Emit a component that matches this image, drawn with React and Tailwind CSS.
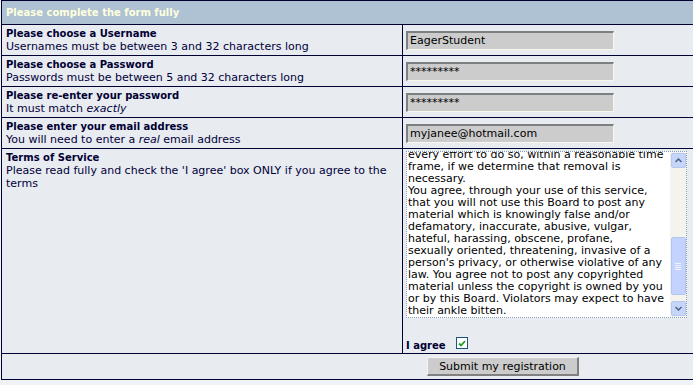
import React from 'react';

const font = { fontFamily: '"DejaVu Sans", Verdana, sans-serif' };

const rows = [
  { title: 'Please choose a Username', sub: <>Usernames must be between 3 and 32 characters long</>, value: 'EagerStudent' },
  { title: 'Please choose a Password', sub: <>Passwords must be between 5 and 32 characters long</>, value: '*********' },
  { title: 'Please re-enter your password', sub: <>It must match <i>exactly</i></>, value: '*********' },
  { title: 'Please enter your email address', sub: <>You will need to enter a <i>real</i> email address</>, value: 'myjanee@hotmail.com' },
];

const terms = [
  'every effort to do so, within a reasonable time',
  'frame, if we determine that removal is',
  'necessary.',
  'You agree, through your use of this service,',
  'that you will not use this Board to post any',
  'material which is knowingly false and/or',
  'defamatory, inaccurate, abusive, vulgar,',
  'hateful, harassing, obscene, profane,',
  'sexually oriented, threatening, invasive of a',
  "person's privacy, or otherwise violative of any",
  'law. You agree not to post any copyrighted',
  'material unless the copyright is owned by you',
  'or by this Board. Violators may expect to have',
  'their ankle bitten.',
];

const Field = ({ value }) => (
  <div className="w-[208px] h-[19px] bg-[#cccccc] border-t-2 border-l-2 border-b border-r border-t-[#7c8080] border-l-[#7c8080] border-b-[#f7f7ee] border-r-[#f7f7ee] pl-[2px] text-[11px] leading-[16px] text-black">
    {value}
  </div>
);

const Scrollbar = () => (
  <div className="w-[16px] h-full bg-[#f4f3ee] flex flex-col items-center py-[1px]">
    {/* up */}
    <div className="w-[15px] h-[15px] rounded-[2px] bg-[#c6d6fb] border border-[#b5c7f0] flex items-center justify-center">
      <svg width="7" height="5" viewBox="0 0 7 5"><path d="M0.5 4 L3.5 1 L6.5 4" fill="none" stroke="#4d6185" strokeWidth="1.5" /></svg>
    </div>
    <div className="flex-1 w-full flex flex-col justify-end pb-[6px]">
      <div className="w-[15px] mx-auto h-[58px] rounded-[2px] bg-[#c3d3fd] border border-[#b1c5f5] flex flex-col items-center justify-center gap-[1px]">
        <div className="w-[6px] h-px bg-[#eef3ff]" />
        <div className="w-[6px] h-px bg-[#eef3ff]" />
        <div className="w-[6px] h-px bg-[#eef3ff]" />
        <div className="w-[6px] h-px bg-[#eef3ff]" />
      </div>
    </div>
    {/* down */}
    <div className="w-[15px] h-[15px] rounded-[2px] bg-[#c6d6fb] border border-[#b5c7f0] flex items-center justify-center">
      <svg width="7" height="5" viewBox="0 0 7 5"><path d="M0.5 1 L3.5 4 L6.5 1" fill="none" stroke="#4d6185" strokeWidth="1.5" /></svg>
    </div>
  </div>
);

export default function App() {
  return (
    <div className="w-[693px] h-[385px] overflow-hidden bg-[#f0f2f6] text-[#000033]" style={font}>
      <div className="w-[1004px] ml-[1px] border border-[#000033] bg-[#e8ebf0]">
        {/* Header */}
        <div className="h-[24px] bg-[#aec2d4] border-b border-[#000033] px-[4px] flex items-center text-[10px] font-bold text-[#ffffdd]">
          Please complete the form fully
        </div>

        {rows.map((r) => (
          <div key={r.title} className="h-[31px] border-b border-[#000033] flex">
            <div className="w-[401px] border-r border-[#000033] px-[4px] pt-[3px]">
              <div className="text-[10px] font-bold leading-[12px]">{r.title}</div>
              <div className="text-[11px] leading-[13px] text-[#00003a]">{r.sub}</div>
            </div>
            <div className="flex-1 pl-[3px] flex items-center">
              <Field value={r.value} />
            </div>
          </div>
        ))}

        {/* Terms */}
        <div className="h-[205px] border-b border-[#000033] flex">
          <div className="w-[401px] border-r border-[#000033] px-[4px] pt-[3px]">
            <div className="text-[10px] font-bold leading-[12px]">Terms of Service</div>
            <div className="text-[11px] leading-[13px] text-[#00003a]">
              Please read fully and check the 'I agree' box ONLY if you agree to the terms
            </div>
          </div>
          <div className="flex-1 pl-[3px] pt-[2px] flex flex-col">
            <div className="w-[281px] h-[167px] border border-dotted border-[#7f9db9] bg-white flex">
              <div className="flex-1 overflow-hidden pl-[1px]">
                <div className="mt-[-3px] text-[11px] leading-[12px] text-black">
                  {terms.map((t) => (
                    <div key={t} className="whitespace-nowrap">{t}</div>
                  ))}
                </div>
              </div>
              <Scrollbar />
            </div>
            <div className="mt-[19px] flex items-end gap-[10px]">
              <span className="text-[10px] font-bold leading-[12px]">I agree</span>
              <div className="w-[12px] h-[12px] mb-[3px] bg-white border border-[#1c5180] flex items-center justify-center">
                <svg width="8" height="7" viewBox="0 0 8 7"><path d="M1 3.5 L3 5.5 L7 1.2" fill="none" stroke="#21a121" strokeWidth="1.8" /></svg>
              </div>
            </div>
          </div>
        </div>

        {/* Submit */}
        <div className="h-[25px] flex items-center justify-center">
          <button className="w-[152px] h-[19px] bg-[#cccccc] border-t border-l border-b-2 border-r-2 border-t-[#f4f4f4] border-l-[#f4f4f4] border-b-[#808080] border-r-[#808080] text-[11px] leading-[15px] text-black">
            Submit my registration
          </button>
        </div>
      </div>
    </div>
  );
}
